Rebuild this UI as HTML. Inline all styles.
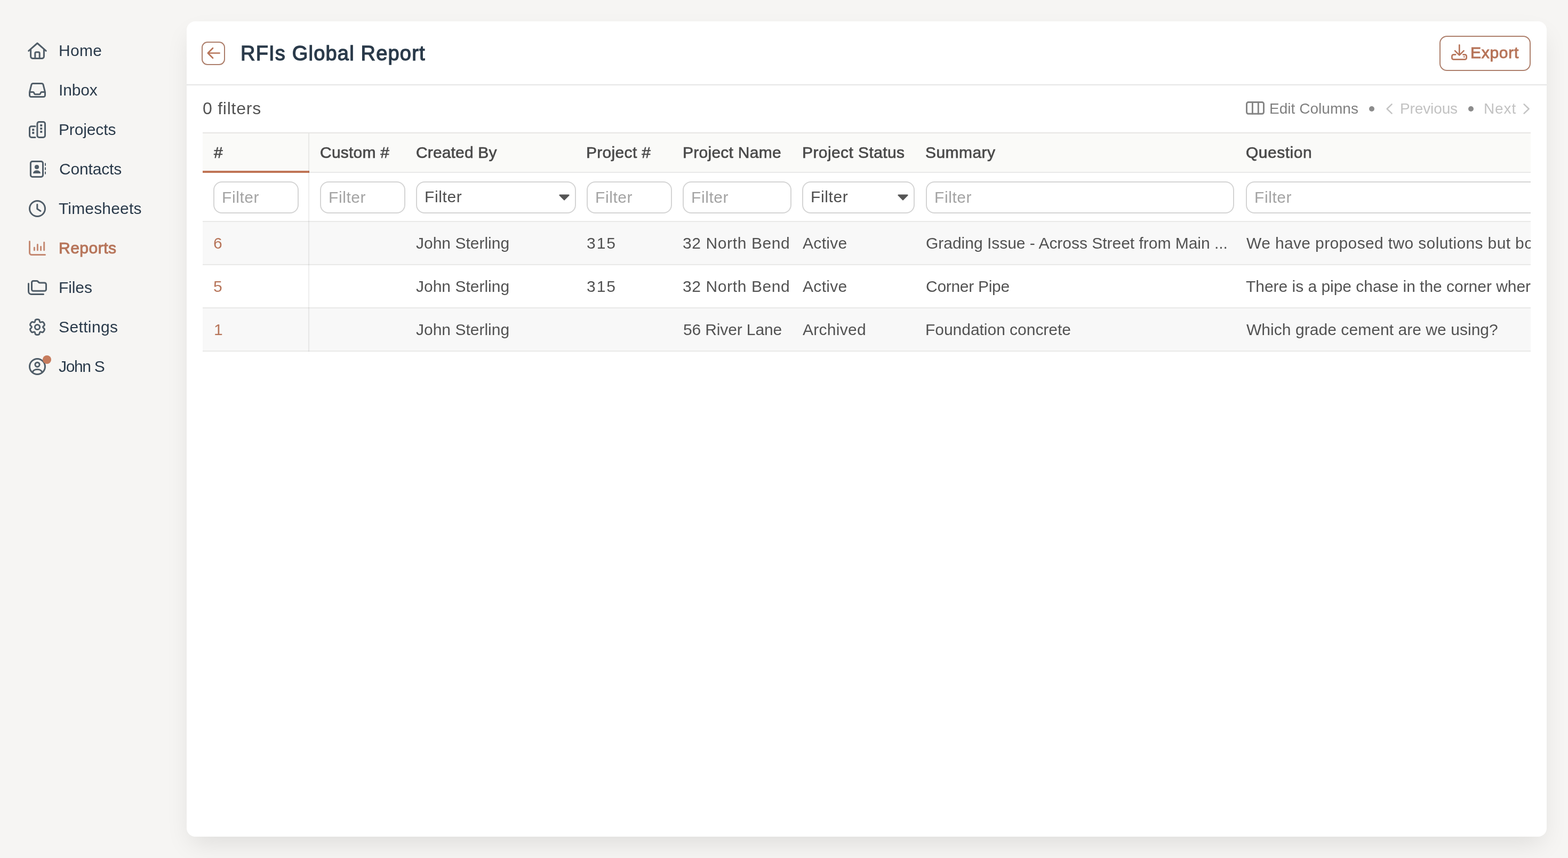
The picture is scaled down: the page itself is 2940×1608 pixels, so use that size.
<!DOCTYPE html>
<html lang="en">
<head>
<meta charset="utf-8">
<title>RFIs Global Report</title>
<style>
*{box-sizing:border-box}
html,body{margin:0;padding:0}
body{background:#f6f5f3;font-family:"Liberation Sans", Arial, sans-serif;font-size:30px;-webkit-font-smoothing:antialiased}
.app{position:relative;width:2940px;height:1608px;overflow:hidden;background:#f6f5f3;zoom:calc(100vw / 2940px)}
.t{position:absolute;white-space:nowrap;display:block;will-change:transform}
.ic{position:absolute;display:block;overflow:visible}
nav a{display:block;text-decoration:none}
.dot{position:absolute;left:80px;top:666px;width:16px;height:16px;border-radius:50%;background:#c67b5c}
.card{position:absolute;left:350px;top:40px;width:2550px;height:1528px;background:#fff;border-radius:16px;
  box-shadow:0 20px 48px -8px rgba(0,0,0,.10)}
.sep{position:absolute;left:0;top:118px;width:100%;height:2px;background:#e5e5e5}
.back{position:absolute;width:44px;height:44px;border:2px solid #ad7f6c;border-radius:11px}
.export{position:absolute;left:2349px;top:27px;width:171px;height:66px;border:2px solid #ad7f6c;border-radius:14px}
.bul{position:absolute;width:10px;height:10px;border-radius:50%;background:#8c8c8c;top:159px}
.table{position:absolute;left:30px;top:208px;width:2490px;height:411px;overflow:hidden;border-top:2px solid #e7e6e4}
.table>*{margin-top:-2px}
.thead{position:absolute;left:0;top:2px;width:100%;height:72px;background:#fafaf8}
.sort{position:absolute;left:0;top:72px;width:200px;height:4px;background:#c07455;z-index:2}
.hline{position:absolute;left:0;width:100%;height:2px;background:#e9e9e8}
.vline{position:absolute;left:198px;top:2px;width:2px;height:409px;background:rgba(0,0,0,.068);z-index:3}
.stripe{position:absolute;left:0;width:100%;background:#f8f8f8}
.inp{position:absolute;top:92px;height:60px;border:2px solid #d4d4d4;border-radius:16px;background:#fff}
.caret{position:absolute;right:10px;top:22px}
</style>
</head>
<body>
<div class="app">
<nav>
<a><svg class="ic" style="left:52px;top:79px;" width="36" height="32" viewBox="0 0 36 32" fill="none" stroke="#505d68" stroke-width="3" stroke-linecap="round" stroke-linejoin="round" aria-hidden="true"><path d="M1.7 16.3 18 2 34.3 16.3"/><path d="M5.6 13.6V26.5a4 4 0 0 0 4 4H26.4a4 4 0 0 0 4-4V13.6"/><path d="M13.8 30V21a2.2 2.2 0 0 1 2.2-2.2h4a2.2 2.2 0 0 1 2.2 2.2V30"/></svg><span class="t" style="left:110.00px;top:73.00px;font-size:30px;line-height:43px;color:#2a3a4a;letter-spacing:0.287px;">Home</span></a>
<a><svg class="ic" style="left:54px;top:153px;" width="32" height="32" viewBox="0 0 32 32" fill="none" stroke="#505d68" stroke-width="3" stroke-linecap="round" stroke-linejoin="round" aria-hidden="true"><path d="M8 3.5H24a3.2 3.2 0 0 1 3.1 2.4L30.3 18.6a4 4 0 0 1 .2 1.2V25.5a3 3 0 0 1-3 3H4.5a3 3 0 0 1-3-3V19.8a4 4 0 0 1 .2-1.2L4.9 5.9A3.2 3.2 0 0 1 8 3.5Z"/><path d="M1.9 19.5H8a1.6 1.6 0 0 1 1.4.9l1.2 2.4a1.6 1.6 0 0 0 1.4.9h8a1.6 1.6 0 0 0 1.4-.9l1.2-2.4a1.6 1.6 0 0 1 1.4-.9h6.1"/></svg><span class="t" style="left:110.30px;top:147.00px;font-size:30px;line-height:43px;color:#2a3a4a;letter-spacing:-0.172px;">Inbox</span></a>
<a><svg class="ic" style="left:54px;top:227px;" width="32" height="32" viewBox="0 0 32 32" fill="none" stroke="#505d68" stroke-width="3" stroke-linecap="round" stroke-linejoin="round" aria-hidden="true"><rect x="15.9" y="1.5" width="14.6" height="29" rx="3.4"/><path d="M12 9.7H5a3.5 3.5 0 0 0-3.5 3.5V27a3.5 3.5 0 0 0 3.5 3.5h7"/><g fill="#505d68" stroke="none"><rect x="21.2" y="6" width="4" height="4" rx=".8"/><rect x="21.2" y="12" width="4" height="4" rx=".8"/><rect x="21.2" y="18" width="4" height="4" rx=".8"/><rect x="6.2" y="14.2" width="4" height="4" rx=".8"/><rect x="6.2" y="20.1" width="4" height="4" rx=".8"/></g></svg><span class="t" style="left:110.10px;top:221.00px;font-size:30px;line-height:43px;color:#2a3a4a;letter-spacing:-0.138px;">Projects</span></a>
<a><svg class="ic" style="left:54px;top:301px;" width="32" height="32" viewBox="0 0 32 32" fill="none" stroke="#505d68" stroke-width="3" stroke-linecap="round" stroke-linejoin="round" aria-hidden="true"><rect x="3.4" y="1.5" width="23.1" height="29" rx="3.4"/><g fill="#505d68" stroke="none"><rect x="30" y="4.6" width="2" height="5.2" rx=".6"/><rect x="30" y="12.5" width="2" height="5.2" rx=".6"/><rect x="30" y="20.4" width="2" height="5.2" rx=".6"/><circle cx="15" cy="12" r="4.1"/><path d="M8 23.9a6 5.6 0 0 1 6-5.6h2a6 5.6 0 0 1 6 5.6Z"/></g></svg><span class="t" style="left:110.50px;top:295.00px;font-size:30px;line-height:43px;color:#2a3a4a;letter-spacing:-0.156px;">Contacts</span></a>
<a><svg class="ic" style="left:54px;top:375px;" width="32" height="32" viewBox="0 0 32 32" fill="none" stroke="#505d68" stroke-width="3" stroke-linecap="round" stroke-linejoin="round" aria-hidden="true"><circle cx="16" cy="16" r="14.5"/><path d="M15.8 8.2V16.4L22 20.4"/></svg><span class="t" style="left:110.20px;top:369.00px;font-size:30px;line-height:43px;color:#2a3a4a;letter-spacing:0.162px;">Timesheets</span></a>
<a class="on"><svg class="ic" style="left:54px;top:451px;" width="32" height="28" viewBox="0 0 32 28" fill="none" stroke="#c58a73" stroke-width="3" stroke-linecap="round" stroke-linejoin="round" aria-hidden="true"><path d="M1.5 1.5V22.5a4 4 0 0 0 4 4H30.5"/><path d="M10.4 12.9V17.8M16.4 7.2V17.8M22.6 11.2V17.8M28.7 3.2V17.8"/></svg><span class="t" style="left:110.10px;top:443.00px;font-size:30px;line-height:43px;color:#b7755a;letter-spacing:0.493px;-webkit-text-stroke:1px #b7755a;">Reports</span></a>
<a><svg class="ic" style="left:52px;top:525px;" width="36" height="28" viewBox="0 0 36 28" fill="none" stroke="#505d68" stroke-width="3" stroke-linecap="round" stroke-linejoin="round" aria-hidden="true"><path d="M7.5 4.5a3 3 0 0 1 3-3h6.3a3 3 0 0 1 2.1.9l1.7 1.7a3 3 0 0 0 2.1.9H31.5a3 3 0 0 1 3 3V17.2a3 3 0 0 1-3 3H10.5a3 3 0 0 1-3-3Z"/><path d="M1.5 6.5V21a5.5 5.5 0 0 0 5.5 5.5H29.5"/></svg><span class="t" style="left:110.30px;top:517.00px;font-size:30px;line-height:43px;color:#2a3a4a;letter-spacing:-0.110px;">Files</span></a>
<a><svg class="ic" style="left:54px;top:597px;" width="32" height="32" viewBox="0 0 32 32" fill="none" stroke="#505d68" stroke-width="3" stroke-linecap="round" stroke-linejoin="round" aria-hidden="true"><path d="M10.73 6.87Q11.69 6.32 11.92 3.96Q12.14 1.61 16.00 1.61Q19.86 1.61 20.08 3.96Q20.31 6.32 21.27 6.87Q22.23 7.42 24.38 6.44Q26.54 5.46 28.46 8.80Q30.39 12.14 28.47 13.52Q26.54 14.89 26.54 16.00Q26.54 17.11 28.47 18.48Q30.39 19.86 28.46 23.20Q26.54 26.54 24.38 25.56Q22.23 24.58 21.27 25.13Q20.31 25.68 20.08 28.04Q19.86 30.39 16.00 30.39Q12.14 30.39 11.92 28.04Q11.69 25.68 10.73 25.13Q9.77 24.58 7.62 25.56Q5.46 26.54 3.54 23.20Q1.61 19.86 3.53 18.48Q5.46 17.11 5.46 16.00Q5.46 14.89 3.53 13.52Q1.61 12.14 3.54 8.80Q5.46 5.46 7.62 6.44Q9.77 7.42 10.73 6.87Z" stroke-width="3"/><circle cx="16" cy="16" r="4.6"/></svg><span class="t" style="left:110.30px;top:591.00px;font-size:30px;line-height:43px;color:#2a3a4a;letter-spacing:0.372px;">Settings</span></a>
<a><svg class="ic" style="left:54px;top:671px;" width="32" height="32" viewBox="0 0 32 32" fill="none" stroke="#505d68" stroke-width="3" stroke-linecap="round" stroke-linejoin="round" aria-hidden="true"><circle cx="16" cy="16" r="14.5"/><circle cx="16" cy="12.3" r="4.1"/><path d="M7.3 26.5a8.8 6.3 0 0 1 17.4 0"/></svg><i class="dot"></i><span class="t" style="left:110.20px;top:665.00px;font-size:30px;line-height:43px;color:#2a3a4a;letter-spacing:-1.338px;">John S</span></a>
</nav>
<main class="card">
<div class="back" style="left:28px;top:38px"><svg class="ic" style="left:0px;top:0px;" width="40" height="40" viewBox="0 0 40 40" fill="none" stroke="#b7755a" stroke-width="2.7" stroke-linecap="round" stroke-linejoin="round" aria-hidden="true"><path d="M9.8 19.5H31.6M19 10.3 9.8 19.5 19 28.7"/></svg></div>
<div class="export"></div>
<svg class="ic" style="left:2370.5px;top:43px;" width="30" height="30" viewBox="0 0 30 30" fill="none" stroke="#b7755a" stroke-width="2.7" stroke-linecap="round" stroke-linejoin="round" aria-hidden="true"><path d="M15.3 1.4V19.6M7 12.1 15.3 20.4 23.6 12.1"/><path d="M8.2 19.3H4.4a3 3 0 0 0-3 3v3.1a3 3 0 0 0 3 3H25.7a3 3 0 0 0 3-3V22.3a3 3 0 0 0-3-3H22.4"/><circle cx="24.3" cy="23.6" r="1.4" fill="#b7755a" stroke="none"/></svg>
<div class="sep"></div>
<svg class="ic" style="left:1985.5px;top:150px;" width="35" height="25" viewBox="0 0 35 25" fill="none" stroke="#848484" stroke-width="2.9" stroke-linecap="round" stroke-linejoin="round" aria-hidden="true"><rect x="1.5" y="1.5" width="32" height="21.8" rx="3.2"/><path d="M12.4 1.5V23.3M23.3 1.5V23.3"/></svg>
<i class="bul" style="left:2217px"></i>
<svg class="ic" style="left:2248px;top:153px;" width="14" height="22" viewBox="0 0 14 22" fill="none" stroke="#c4c4c4" stroke-width="2.5" stroke-linecap="round" stroke-linejoin="round" aria-hidden="true"><path d="M11.6 2.3 2.6 11 11.6 19.7"/></svg>
<i class="bul" style="left:2403px"></i>
<svg class="ic" style="left:2505px;top:153px;" width="14" height="22" viewBox="0 0 14 22" fill="none" stroke="#c4c4c4" stroke-width="2.5" stroke-linecap="round" stroke-linejoin="round" aria-hidden="true"><path d="M2.6 2.3 11.6 11 2.6 19.7"/></svg>
<span class="t" style="left:100.50px;top:34.00px;font-size:38px;line-height:52px;color:#2a3a4a;letter-spacing:1.196px;-webkit-text-stroke:1.3px #2a3a4a;">RFIs Global Report</span>
<span class="t" style="left:2407.10px;top:37.00px;font-size:30px;line-height:43px;color:#b7755a;letter-spacing:0.706px;-webkit-text-stroke:1px #b7755a;">Export</span>
<span class="t" style="left:30.00px;top:140.00px;font-size:32px;line-height:46px;color:#525252;letter-spacing:0.757px;">0 filters</span>
<span class="t" style="left:2030.40px;top:143.00px;font-size:28px;line-height:41px;color:#808080;letter-spacing:0.035px;">Edit Columns</span>
<span class="t" style="left:2274.60px;top:143.00px;font-size:28px;line-height:41px;color:#c2c2c2;letter-spacing:-0.120px;">Previous</span>
<span class="t" style="left:2432.30px;top:143.00px;font-size:28px;line-height:41px;color:#c2c2c2;letter-spacing:0.869px;">Next</span>
<div class="table">
<div class="thead"></div>
<div class="sort"></div>
<div class="hline" style="top:74px"></div>
<div class="hline" style="top:166px"></div>
<div class="stripe" style="top:168px;height:79px"></div>
<div class="hline" style="top:247px"></div>
<div class="hline" style="top:328px"></div>
<div class="stripe" style="top:330px;height:79px"></div>
<div class="hline" style="top:409px"></div>
<div class="vline"></div>
<div class="inp" style="left:20px;width:160px"></div>
<div class="inp" style="left:220px;width:160px"></div>
<div class="inp" style="left:720px;width:160px"></div>
<div class="inp" style="left:900px;width:204px"></div>
<div class="inp" style="left:1356px;width:578px"></div>
<div class="inp" style="left:1956px;width:700px"></div>
<div class="inp sel" style="left:400px;width:300px"><svg class="caret" width="20" height="12" viewBox="0 0 20 12" aria-hidden="true"><path d="M1.6 0.6H18.4a1.2 1.2 0 0 1 .9 2L10.9 11a1.2 1.2 0 0 1-1.8 0L.7 2.6a1.2 1.2 0 0 1 .9-2Z" fill="#555"/></svg></div>
<div class="inp sel" style="left:1124px;width:211px"><svg class="caret" width="20" height="12" viewBox="0 0 20 12" aria-hidden="true"><path d="M1.6 0.6H18.4a1.2 1.2 0 0 1 .9 2L10.9 11a1.2 1.2 0 0 1-1.8 0L.7 2.6a1.2 1.2 0 0 1 .9-2Z" fill="#555"/></svg></div>
<span class="t" style="left:21.00px;top:16.00px;font-size:30px;line-height:43px;color:#4a4a4a;-webkit-text-stroke:0.7px #4a4a4a;">#</span>
<span class="t" style="left:220.00px;top:16.00px;font-size:30px;line-height:43px;color:#4a4a4a;letter-spacing:0.215px;-webkit-text-stroke:0.7px #4a4a4a;">Custom #</span>
<span class="t" style="left:400.00px;top:16.00px;font-size:30px;line-height:43px;color:#4a4a4a;letter-spacing:0.147px;-webkit-text-stroke:0.7px #4a4a4a;">Created By</span>
<span class="t" style="left:719.40px;top:16.00px;font-size:30px;line-height:43px;color:#4a4a4a;letter-spacing:0.312px;-webkit-text-stroke:0.7px #4a4a4a;">Project #</span>
<span class="t" style="left:899.50px;top:16.00px;font-size:30px;line-height:43px;color:#4a4a4a;letter-spacing:0.260px;-webkit-text-stroke:0.7px #4a4a4a;">Project Name</span>
<span class="t" style="left:1123.60px;top:16.00px;font-size:30px;line-height:43px;color:#4a4a4a;letter-spacing:0.411px;-webkit-text-stroke:0.7px #4a4a4a;">Project Status</span>
<span class="t" style="left:1355.00px;top:16.00px;font-size:30px;line-height:43px;color:#4a4a4a;letter-spacing:0.442px;-webkit-text-stroke:0.7px #4a4a4a;">Summary</span>
<span class="t" style="left:1955.60px;top:16.00px;font-size:30px;line-height:43px;color:#4a4a4a;letter-spacing:0.516px;-webkit-text-stroke:0.7px #4a4a4a;">Question</span>
<span class="t" style="left:36.00px;top:100.00px;font-size:30px;line-height:43px;color:#a3a3a3;letter-spacing:0.585px;">Filter</span>
<span class="t" style="left:236.00px;top:100.00px;font-size:30px;line-height:43px;color:#a3a3a3;letter-spacing:0.585px;">Filter</span>
<span class="t" style="left:736.00px;top:100.00px;font-size:30px;line-height:43px;color:#a3a3a3;letter-spacing:0.585px;">Filter</span>
<span class="t" style="left:916.00px;top:100.00px;font-size:30px;line-height:43px;color:#a3a3a3;letter-spacing:0.585px;">Filter</span>
<span class="t" style="left:1372.00px;top:100.00px;font-size:30px;line-height:43px;color:#a3a3a3;letter-spacing:0.585px;">Filter</span>
<span class="t" style="left:1972.00px;top:100.00px;font-size:30px;line-height:43px;color:#a3a3a3;letter-spacing:0.585px;">Filter</span>
<span class="t" style="left:416.00px;top:99.00px;font-size:30px;line-height:43px;color:#4d4d4d;letter-spacing:0.625px;">Filter</span>
<span class="t" style="left:1140.00px;top:99.00px;font-size:30px;line-height:43px;color:#4d4d4d;letter-spacing:0.625px;">Filter</span>
<span class="t" style="left:20.00px;top:186.00px;font-size:30px;line-height:43px;color:#b7755a;">6</span>
<span class="t" style="left:399.90px;top:186.00px;font-size:30px;line-height:43px;color:#525252;">John Sterling</span>
<span class="t" style="left:720.00px;top:186.00px;font-size:30px;line-height:43px;color:#525252;letter-spacing:1.965px;">315</span>
<span class="t" style="left:899.70px;top:186.00px;font-size:30px;line-height:43px;color:#525252;letter-spacing:0.610px;">32 North Bend</span>
<span class="t" style="left:1125.00px;top:186.00px;font-size:30px;line-height:43px;color:#525252;letter-spacing:0.318px;">Active</span>
<span class="t" style="left:1355.50px;top:186.00px;font-size:30px;line-height:43px;color:#525252;letter-spacing:-0.023px;">Grading Issue - Across Street from Main ...</span>
<span class="t" style="left:1956.50px;top:186.00px;font-size:30px;line-height:43px;color:#525252;letter-spacing:0.363px;">We have proposed two solutions but both</span>
<span class="t" style="left:20.00px;top:267.00px;font-size:30px;line-height:43px;color:#b7755a;">5</span>
<span class="t" style="left:399.90px;top:267.00px;font-size:30px;line-height:43px;color:#525252;">John Sterling</span>
<span class="t" style="left:720.00px;top:267.00px;font-size:30px;line-height:43px;color:#525252;letter-spacing:1.965px;">315</span>
<span class="t" style="left:899.70px;top:267.00px;font-size:30px;line-height:43px;color:#525252;letter-spacing:0.610px;">32 North Bend</span>
<span class="t" style="left:1125.00px;top:267.00px;font-size:30px;line-height:43px;color:#525252;letter-spacing:0.318px;">Active</span>
<span class="t" style="left:1355.50px;top:267.00px;font-size:30px;line-height:43px;color:#525252;letter-spacing:-0.289px;">Corner Pipe</span>
<span class="t" style="left:1955.50px;top:267.00px;font-size:30px;line-height:43px;color:#525252;letter-spacing:-0.030px;">There is a pipe chase in the corner where</span>
<span class="t" style="left:21.00px;top:348.00px;font-size:30px;line-height:43px;color:#b7755a;">1</span>
<span class="t" style="left:399.90px;top:348.00px;font-size:30px;line-height:43px;color:#525252;">John Sterling</span>
<span class="t" style="left:900.50px;top:348.00px;font-size:30px;line-height:43px;color:#525252;letter-spacing:-0.133px;">56 River Lane</span>
<span class="t" style="left:1125.00px;top:348.00px;font-size:30px;line-height:43px;color:#525252;letter-spacing:0.267px;">Archived</span>
<span class="t" style="left:1355.30px;top:348.00px;font-size:30px;line-height:43px;color:#525252;letter-spacing:-0.030px;">Foundation concrete</span>
<span class="t" style="left:1956.50px;top:348.00px;font-size:30px;line-height:43px;color:#525252;letter-spacing:0.050px;">Which grade cement are we using?</span>
</div>
</main>
</div>
</body>
</html>
